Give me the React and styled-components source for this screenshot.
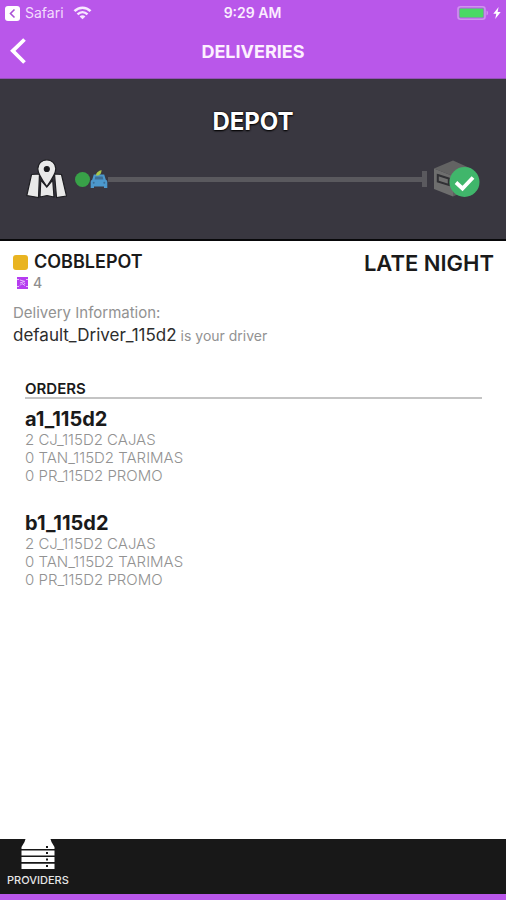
import React from 'react';
import styled, { createGlobalStyle } from 'styled-components';

const GlobalStyle = createGlobalStyle`
  * {
    box-sizing: border-box;
  }
  body {
    margin: 0;
    background: #fff;
    font-family: Inter, 'Liberation Sans', sans-serif;
  }
  h1, h2, h3, p, ul {
    margin: 0;
    padding: 0;
    font-weight: 600;
  }
`;

const Screen = styled.div`
  display: flex;
  flex-direction: column;
  min-height: 100vh;
`;

const Header = styled.header`
  background: #b957ea;
  color: #fff;
`;

const StatusBar = styled.div`
  display: grid;
  grid-template-columns: 1fr auto 1fr;
  align-items: center;
  height: 26px;
  padding: 0 5px 0 4px;
  font-size: 14px;
  line-height: 16px;
`;

const StatusGroup = styled.div`
  display: flex;
  align-items: center;
  justify-content: ${({ $end }) => ($end ? 'flex-end' : 'flex-start')};
  gap: ${({ $end }) => ($end ? '4px' : '9px')};
`;

const AppLink = styled.a`
  display: flex;
  align-items: center;
  gap: 5px;
  color: #f3dcfd;
  text-decoration: none;
`;

const Clock = styled.time`
  color: #fbeeff;
  font-weight: 600;
`;

const NavBar = styled.nav`
  display: grid;
  grid-template-columns: 1fr auto 1fr;
  align-items: center;
  height: 53px;
  padding: 0 10px 1px;
  border-bottom: 1px solid #9450b8;
`;

const BackButton = styled.button`
  display: flex;
  justify-self: start;
  padding: 0;
  border: 0;
  background: none;
  color: #fff;
  cursor: pointer;
`;

const Title = styled.h1`
  color: #fdf0ff;
  font-size: 18px;
  font-weight: 700;
  line-height: 24px;
`;

const Tracker = styled.section`
  height: 162px;
  padding: 27px 26px 0;
  border-bottom: 2px solid #08080a;
  background: #393740;
`;

const Place = styled.h2`
  color: #fff;
  font-size: 24px;
  font-weight: 700;
  line-height: 32px;
  text-align: center;
  text-shadow: 0 0 2px #000, 0 1px 2px #000;
`;

const Route = styled.div`
  display: flex;
  align-items: center;
  margin-top: 20px;
`;

const Start = styled.span`
  width: 15px;
  height: 15px;
  margin-left: 8px;
  border-radius: 50%;
  background: #38a148;
`;

const Track = styled.span`
  flex: 1;
  height: 5px;
  background: #5a595e;
`;

const TrackEnd = styled.span`
  width: 5px;
  height: 16px;
  margin-right: 7px;
  background: #5a595e;
`;

const Main = styled.main`
  flex: 1;
  padding: 9px 12px 8px 13px;
`;

const Row = styled.div`
  display: flex;
  align-items: flex-start;
  justify-content: space-between;
`;

const Customer = styled.h2`
  display: flex;
  align-items: center;
  gap: 6px;
  color: #1a1a1a;
  font-size: 18px;
  line-height: 24px;
`;

const Swatch = styled.span`
  width: 15px;
  height: 15px;
  border-radius: 3px;
  background: #e9b421;
`;

const Shift = styled.p`
  color: #1a1a1a;
  font-size: 22px;
  line-height: 26px;
`;

const Count = styled.p`
  display: flex;
  align-items: center;
  gap: 4px;
  padding-left: 3px;
  color: #8e8e8e;
  font-size: 14px;
  font-weight: 500;
  line-height: 14px;
`;

const Info = styled.div`
  margin-top: 12px;
  color: #929292;
  font-size: 14px;
  line-height: 22px;
`;

const InfoLabel = styled.div`
  font-size: 15px;
`;

const Driver = styled.span`
  color: #2d2d2d;
  font-size: 17px;
`;

const Orders = styled.section`
  margin: 34px 12px 0;
`;

const OrdersTitle = styled.h3`
  border-bottom: 2px solid #c4c4c4;
  color: #1a1a1a;
  font-size: 15px;
  line-height: 16px;
`;

const Order = styled.article`
  margin: 8px 0 26px;
`;

const OrderName = styled.h3`
  color: #1a1a1a;
  font-size: 20px;
  font-weight: 700;
  line-height: 24px;
`;

const Items = styled.ul`
  color: #929292;
  font-size: 15px;
  font-weight: 300;
  line-height: 18px;
  list-style: none;
`;

const Footer = styled.footer`
  height: 61px;
  border-bottom: 6px solid #b957ea;
  background: #181818;
`;

const Tab = styled.button`
  display: flex;
  flex-direction: column;
  align-items: center;
  gap: 4px;
  padding: 0 7px;
  border: 0;
  background: none;
  color: #e6e6e6;
  font-family: inherit;
  font-size: 11px;
  font-weight: 500;
  line-height: 14px;
  cursor: pointer;
`;

const items = ['2 CJ_115D2 CAJAS', '0 TAN_115D2 TARIMAS', '0 PR_115D2 PROMO'];
const orders = [
  { name: 'a1_115d2', items },
  { name: 'b1_115d2', items },
];

function SafariIcon() {
  return (
    <svg width="16" height="16" viewBox="0 0 16 16" aria-hidden="true">
      <rect x="1" y="1" width="15" height="15" rx="3" fill="#fff" />
      <path d="M10.5 4.5 6.5 8.5l4 4" fill="none" stroke="#a850d5" strokeWidth="1.6" />
    </svg>
  );
}

function WifiIcon() {
  return (
    <svg width="19" height="14" viewBox="0 0 19 14" fill="none" stroke="#f8e8ff" aria-hidden="true">
      <path d="M1.5 5.2C6 .5 13 .5 17.5 5.2" strokeWidth="2.6" />
      <path d="M4.5 8.4c3-3 7-3 10 0" strokeWidth="2.4" />
      <path d="M6.6 10.4c1.6-1.5 4.2-1.5 5.8 0L9.5 13.3z" fill="#f8e8ff" stroke="none" />
    </svg>
  );
}

function BatteryIcon() {
  return (
    <svg width="32" height="14" viewBox="0 0 32 14" aria-hidden="true">
      <rect x="1" y=".8" width="27" height="12.4" rx="2.5" fill="none" stroke="#cf94ee" strokeWidth="1.6" />
      <rect x="2.5" y="2.5" width="24" height="9" rx="1" fill="#4bd964" />
      <path d="M29.5 4.5c2.2 1 2.2 4 0 5z" fill="#cf94ee" />
    </svg>
  );
}

function BoltIcon() {
  return (
    <svg width="8" height="12" viewBox="0 0 8 12" fill="#fff" aria-hidden="true">
      <path d="M5.6 0 .3 6.8h3L2.2 12l5.5-7H4.6z" />
    </svg>
  );
}

function BackIcon() {
  return (
    <svg width="18" height="28" viewBox="0 0 18 28" fill="none" stroke="#fff" strokeWidth="3.8" aria-hidden="true">
      <path d="M14.5 1.5 2.8 12.8l11.7 11.7" />
    </svg>
  );
}

function MapIcon() {
  return (
    <svg width="41" height="42" viewBox="0 0 41 42" fill="#e9e9e9" stroke="#1e1e22" strokeWidth="1.2" aria-hidden="true">
      <path d="m5.5 16.5 8-.5-1 23.5L.8 37.5z" />
      <path d="m14.8 22 6 7 5.9-7L28 39l-7-1.5-7 1.5z" />
      <path d="m28.5 16 7 .5 5 21.5-10 1.5z" />
      <path d="M20.8 28.5C15.5 21 11.8 16 11.8 10.8a9 9 0 0 1 18 0c0 5.2-3.7 10.2-9 17.700z" />
      <circle cx="20.8" cy="11" r="2.5" fill="#19191c" />
    </svg>
  );
}

function CarIcon() {
  return (
    <svg width="18" height="20" viewBox="0 0 18 20" aria-hidden="true">
      <path d="M3.8 5.5h10.4l1.6 5.3q1.5.6 1.5 2V19H14v-1.5H4V19H.7v-6.2q0-1.4 1.5-2z" fill="#4c98cc" />
      <path d="M5.4 7.5h7.2l.8 3H4.6z" fill="#3d6f95" />
      <path d="M6 6.500C6 3.500 8.500 2 11.500 1c0 3.200-1.500 5.500-4 5.500z" fill="#a7c84c" />
      <circle cx="3.7" cy="13.8" r="1" fill="#3d6f95" />
      <circle cx="14.3" cy="13.8" r="1" fill="#3d6f95" />
    </svg>
  );
}

function BoxIcon() {
  return (
    <svg width="46" height="40" viewBox="0 0 46 40" aria-hidden="true">
      <path d="M0 9.5 19 1.5 38 10 19 17z" fill="#636363" />
      <path d="m0 9.5 19 7.5v20.5L0 30z" fill="#6e6e6e" />
      <path d="m19 17 19-7v19l-19 8.5z" fill="#606060" />
      <path d="m3.8 16 11 3.5V26l-11-3.5z" fill="#707070" stroke="#303034" strokeWidth="2" />
      <circle cx="30.5" cy="23" r="15" fill="#40b66b" />
      <path d="m22 23.5 6.5 6L39 18.500" fill="none" stroke="#fff" strokeWidth="3.8" />
    </svg>
  );
}

function CrateIcon() {
  return (
    <svg width="13" height="13" viewBox="0 0 13 13" aria-hidden="true">
      <rect x="1" width="11" height="12" fill="#b63cf0" />
      <path d="M1 2.5h2m7 0h2M1 9.5h2m7 0h2M4 3l5 1.5M4 6l4-1.5M4 8.5l2-2 3 2M8 5.5l1 1.5" stroke="#e5bdfa" fill="none" />
    </svg>
  );
}

function ProvidersIcon() {
  return (
    <svg width="34" height="30" viewBox="0 0 34 30" fill="#fff" aria-hidden="true">
      <path d="M4.5 0h25l1 3 3 5v2H.5V8l3-5z" />
      <path d="M.5 11.5h33v5H.5zM.5 18h33v5H.5zM.5 24.8h33V30H.5z" />
      <path d="M25 7h2v2h-2zM25 13h2v2h-2zM25 19.5h2v2h-2zM25 26h2v2h-2z" fill="#181818" />
    </svg>
  );
}

function App() {
  return (
    <Screen>
      <GlobalStyle />
      <Header>
        <StatusBar>
          <StatusGroup>
            <AppLink href="#safari">
              <SafariIcon />
              Safari
            </AppLink>
            <WifiIcon />
          </StatusGroup>
          <Clock>9:29 AM</Clock>
          <StatusGroup $end>
            <BatteryIcon />
            <BoltIcon />
          </StatusGroup>
        </StatusBar>
        <NavBar>
          <BackButton type="button" aria-label="Back">
            <BackIcon />
          </BackButton>
          <Title>DELIVERIES</Title>
        </NavBar>
      </Header>

      <Tracker>
        <Place>DEPOT</Place>
        <Route>
          <MapIcon />
          <Start />
          <CarIcon />
          <Track />
          <TrackEnd />
          <BoxIcon />
        </Route>
      </Tracker>

      <Main>
        <Row>
          <Customer>
            <Swatch />
            COBBLEPOT
          </Customer>
          <Shift>LATE NIGHT</Shift>
        </Row>
        <Count>
          <CrateIcon />
          4
        </Count>
        <Info>
          <InfoLabel>Delivery Information:</InfoLabel>
          <div>
            <Driver>default_Driver_115d2</Driver> is your driver
          </div>
        </Info>
        <Orders>
          <OrdersTitle>ORDERS</OrdersTitle>
          {orders.map((order) => (
            <Order key={order.name}>
              <OrderName>{order.name}</OrderName>
              <Items>
                {order.items.map((item) => (
                  <li key={item}>{item}</li>
                ))}
              </Items>
            </Order>
          ))}
        </Orders>
      </Main>

      <Footer>
        <Tab type="button">
          <ProvidersIcon />
          PROVIDERS
        </Tab>
      </Footer>
    </Screen>
  );
}

export default App;
